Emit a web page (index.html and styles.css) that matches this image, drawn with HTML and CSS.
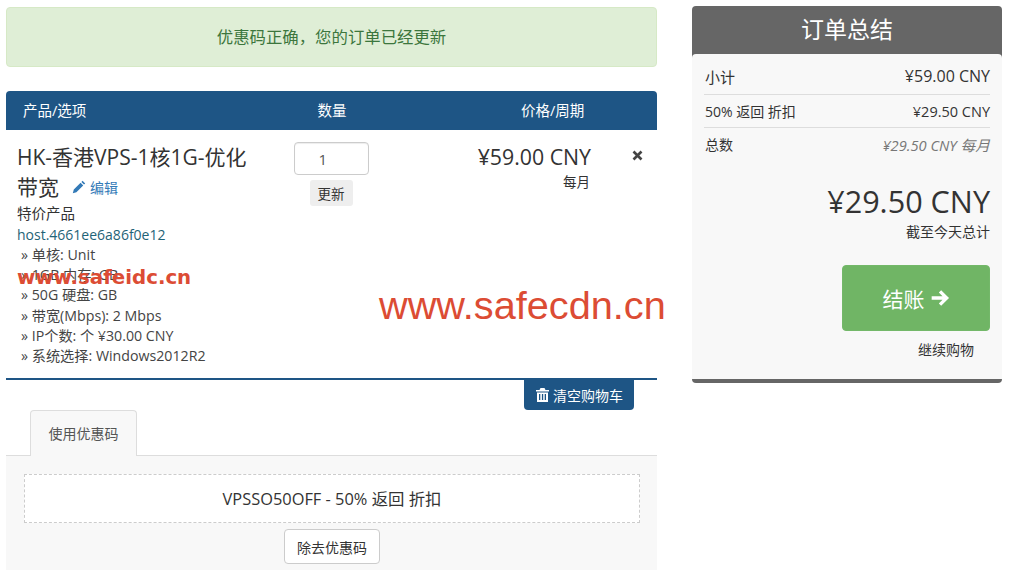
FILE: index.html
```html
<!DOCTYPE html>
<html lang="zh">

<head>
    <meta charset="UTF-8">
    <meta name="viewport" content="width=device-width, initial-scale=1.0">
    <title>购物车</title>
    <link rel="stylesheet" href="styles.css">
</head>

<body>
    <div class="page">

        <div class="cart">
            <div class="alert">优惠码正确，您的订单已经更新</div>

            <div class="cart-head">
                <div>产品/选项</div>
                <div class="head-qty">数量</div>
                <div class="head-price">价格/周期</div>
            </div>

            <div class="cart-item">
                <div class="item-info">
                    <div class="item-title">HK-香港VPS-1核1G-优化带宽 <a class="edit-link" href="#">
                        <svg class="icon-pencil" viewBox="0 0 14 14"><path d="M10.6 .8 13.2 3.4 12 4.6 9.4 2ZM8.6 2.8 11.2 5.4 4.4 12.2 .8 13.2 1.8 9.6Z" /></svg>
                        编辑</a></div>
                    <div class="item-group">特价产品</div>
                    <div class="item-host">host.4661ee6a86f0e12</div>
                    <ul class="item-options">
                        <li>» 单核: Unit</li>
                        <li>» 1GB 内存: GB</li>
                        <li>» 50G 硬盘: GB</li>
                        <li>» 带宽(Mbps): 2 Mbps</li>
                        <li>» IP个数: 个 ¥30.00 CNY</li>
                        <li>» 系统选择: Windows2012R2</li>
                    </ul>
                </div>
                <div class="item-qty">
                    <input class="qty-input" type="text" value="1">
                    <button class="btn-update">更新</button>
                </div>
                <div class="item-price">
                    <div class="price-amount">¥59.00 CNY</div>
                    <div class="price-cycle">每月</div>
                </div>
                <div class="item-remove">
                    <svg class="icon-x" viewBox="0 0 11 11"><path d="M1.5 1.5 9.5 9.5M9.5 1.5 1.5 9.5" /></svg>
                </div>
            </div>

            <div class="empty-row">
                <button class="btn-empty">
                    <svg class="icon-trash" viewBox="0 0 13 14"><path d="M4.5 0h4l1 2H13v1.500H0V2h3.500ZM1 4.500h11V14H1ZM3 6v6h1.300V6ZM5.900 6v6h1.300V6ZM8.700 6v6H10V6Z" fill-rule="evenodd" /></svg>
                    清空购物车</button>
            </div>

            <div class="tabs">
                <div class="tab">使用优惠码</div>
            </div>
            <div class="tab-panel">
                <div class="promo-box">VPSSO50OFF - 50% 返回 折扣</div>
                <button class="btn-remove">除去优惠码</button>
            </div>
        </div>

        <div class="summary">
            <h2 class="summary-head">订单总结</h2>
            <div class="summary-body">
                <div class="sum-row sum-sub"><span>小计</span><b>¥59.00 CNY</b></div>
                <div class="sum-row sum-disc"><span>50% 返回 折扣</span><b>¥29.50 CNY</b></div>
                <div class="sum-row sum-total"><span>总数</span><em>¥29.50 CNY 每月</em></div>
                <div class="today-amount">¥29.50 CNY</div>
                <div class="today-label">截至今天总计</div>
                <div class="sum-actions">
                    <button class="btn-checkout">结账
                        <svg class="icon-arrow" viewBox="0 0 18 16"><path d="M1.500 8H15M9 2 15 8 9 14" /></svg>
                    </button>
                    <a class="continue" href="#">继续购物</a>
                </div>
            </div>
        </div>
    </div>

    <div class="mark-small">www.safeidc.cn</div>
    <div class="mark-big">www.safecdn.cn</div>
</body>

</html>
```

FILE: styles.css
```css
html,
body {
    margin: 0;
    height: 570px;
    overflow: hidden;
    background: #fff;
}

body {
    font-family: "Open Sans", "Noto Sans CJK SC", sans-serif;
    font-size: 14px;
    color: #333;
    position: relative;
}

.page {
    display: flex;
    align-items: flex-start;
    gap: 35px;
    padding: 6px 0 0 6px;
}

.cart {
    width: 651px;
    flex: none;
}

.alert {
    height: 58px;
    line-height: 58px;
    margin-top: 1px;
    margin-bottom: 24px;
    text-align: center;
    font-size: 16.400px;
    color: #3c763d;
    background: #dfeed6;
    border: 1px solid #d6e9c6;
    border-radius: 4px;
    width: 649px;
}

.cart-head {
    display: grid;
    grid-template-columns: 269px 80px 1fr;
    height: 39px;
    line-height: 40px;
    padding-left: 17px;
    box-sizing: border-box;
    background: #1e5585;
    color: #fff;
    font-size: 14.500px;
    border-radius: 4px 4px 0 0;
}

.head-qty {
    text-align: center;
}

.head-price {
    padding-left: 149px;
}

.cart-item {
    display: grid;
    grid-template-columns: 249px 130px 195px 66px;
    height: 250px;
    padding-left: 11px;
    box-sizing: border-box;
    border-bottom: 2px solid #1e5585;
}

.item-info {
    padding-top: 12px;
}

.item-title {
    font-size: 21px;
    line-height: 30px;
}

.edit-link {
    font-size: 14px;
    color: #337ab7;
    text-decoration: none;
    margin-left: 8px;
    position: relative;
    top: -2px;
}

.icon-pencil {
    width: 14px;
    height: 14px;
    fill: #337ab7;
    vertical-align: -1px;
}

.item-group {
    line-height: 20px;
    margin-top: -1px;
    font-size: 14.500px;
}

.item-host {
    line-height: 20px;
    margin-top: 1px;
    color: #1f6377;
}

.item-options {
    list-style: none;
    margin: 0;
    padding: 0 0 0 4px;
    color: #444;
    font-size: 14.200px;
    line-height: 20.200px;
}

.item-qty {
    display: flex;
    flex-direction: column;
    align-items: center;
    padding-top: 12px;
}

.qty-input {
    width: 75px;
    height: 33px;
    box-sizing: border-box;
    border: 1px solid #ccc;
    border-radius: 4px;
    padding: 0 24px;
    font: 15px "Open Sans", sans-serif;
    color: #555;
    box-shadow: inset 0 1px 1px rgba(0, 0, 0, 0.075);
}

.btn-update {
    width: 43px;
    height: 26px;
    margin-top: 5px;
    padding: 0;
    border: 0;
    border-radius: 3px;
    background: #eee;
    color: #333;
    font: 13.500px "Open Sans", "Noto Sans CJK SC", sans-serif;
}

.item-price {
    text-align: right;
    padding-top: 12px;
}

.price-amount {
    font-size: 21.300px;
    line-height: 30px;
}

.price-cycle {
    font-size: 13.500px;
    line-height: 20px;
    padding-right: 1px;
}

.item-remove {
    padding: 20px 0 0 41px;
}

.icon-x {
    display: block;
    width: 11px;
    height: 11px;
    fill: none;
    stroke: #444;
    stroke-width: 2.6;
}

.empty-row {
    height: 30px;
    padding-left: 518px;
}

.btn-empty {
    display: flex;
    align-items: center;
    gap: 4px;
    width: 110px;
    height: 30px;
    padding: 0 0 0 12px;
    border: 0;
    border-radius: 0 0 4px 4px;
    background: #1e5585;
    color: #fff;
    font: 14px "Open Sans", "Noto Sans CJK SC", sans-serif;
}

.icon-trash {
    width: 13px;
    height: 14px;
    fill: #fff;
    flex: none;
}

.tabs {
    height: 45px;
    padding-left: 24px;
    border-bottom: 1px solid #ddd;
}

.tab {
    width: 105px;
    height: 45px;
    line-height: 46px;
    text-align: center;
    background: #f8f8f8;
    border: 1px solid #ddd;
    border-bottom: 0;
    border-radius: 4px 4px 0 0;
    color: #555;
}

.tab-panel {
    display: flex;
    flex-direction: column;
    align-items: center;
    height: 120px;
    padding: 18px 17px 0 18px;
    box-sizing: border-box;
    background: #f8f8f8;
}

.promo-box {
    width: 100%;
    height: 49px;
    line-height: 47px;
    box-sizing: border-box;
    text-align: center;
    background: #fff;
    border: 1px dashed #ccc;
    font-size: 16.400px;
}

.btn-remove {
    width: 96px;
    height: 35px;
    margin-top: 6px;
    padding: 0;
    border: 1px solid #ccc;
    border-radius: 4px;
    background: #fff;
    color: #333;
    font: 14px "Open Sans", "Noto Sans CJK SC", sans-serif;
}

.summary {
    width: 310px;
    flex: none;
    border-radius: 4px;
    overflow: hidden;
    background: #666;
}

.summary-head {
    margin: 0;
    height: 48px;
    line-height: 46px;
    text-align: center;
    color: #fff;
    font-size: 23px;
    font-weight: 400;
}

.summary-body {
    height: 325px;
    margin-bottom: 4px;
    padding: 0 12px;
    box-sizing: border-box;
    background: #f8f8f8;
    border-radius: 4px 4px 0 0;
}

.sum-row {
    display: flex;
    justify-content: space-between;
    align-items: center;
    border-bottom: 1px solid #ddd;
}

.sum-row span {
    padding-left: 1px;
}

.sum-row b {
    font-weight: 400;
}

.sum-sub {
    height: 41px;
    font-size: 15px;
    padding-top: 4px;
    box-sizing: border-box;
}

.sum-sub b {
    font-size: 16px;
}

.sum-disc {
    height: 32px;
}

.sum-disc b {
    font-size: 14.500px;
}

.sum-total {
    height: 32px;
    border-bottom: 0;
}

.sum-total em {
    color: #777;
    font-size: 14.700px;
}

.today-amount {
    margin-top: 20px;
    font-size: 30.600px;
    line-height: 42px;
    text-align: right;
}

.today-label {
    font-size: 14px;
    line-height: 18px;
    margin-top: 1px;
    text-align: right;
}

.sum-actions {
    width: 148px;
    margin: 24px 0 0 auto;
    text-align: right;
}

.btn-checkout {
    display: flex;
    align-items: center;
    justify-content: center;
    gap: 5px;
    width: 148px;
    height: 66px;
    padding: 0;
    border: 1px solid #73b869;
    border-radius: 4px;
    background: #70b565;
    color: #fff;
    font: 21px "Open Sans", "Noto Sans CJK SC", sans-serif;
}

.icon-arrow {
    width: 20px;
    height: 18px;
    fill: none;
    stroke: #fff;
    stroke-width: 3;
}

.continue {
    display: block;
    margin-top: 10px;
    padding-right: 16px;
    color: #333;
    text-decoration: none;
    line-height: 18px;
}

.mark-small {
    position: absolute;
    left: 17px;
    top: 265px;
    font: bold 19.800px/26px "DejaVu Sans", sans-serif;
    color: #dc4c34;
}

.mark-big {
    position: absolute;
    left: 379px;
    top: 282px;
    font: 39.700px/46px "Liberation Sans", sans-serif;
    color: #dc4c34;
}
```
